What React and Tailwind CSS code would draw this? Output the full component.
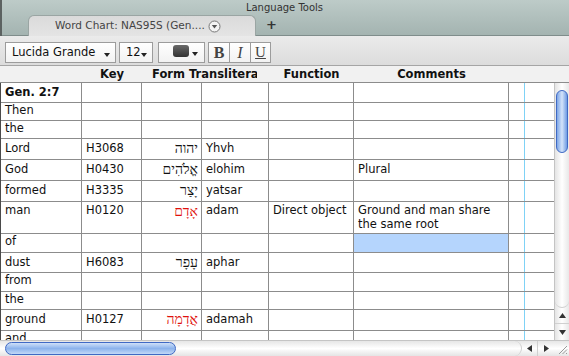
import React from "react";

const rows = [
  { w: "Gen. 2:7", bold: true, h: "h-[20px]", pt: "pt-[2px]" },
  { w: "Then", h: "h-[18px]", pt: "pt-0" },
  { w: "the", h: "h-[18px]", pt: "pt-0" },
  { w: "Lord", key: "H3068", heb: "יהוה", tr: "Yhvh", h: "h-[21px]", pt: "pt-[2px]" },
  { w: "God", key: "H0430", heb: "אֱלֹהִים", tr: "elohim", cm: "Plural", h: "h-[21px]", pt: "pt-[2px]" },
  { w: "formed", key: "H3335", heb: "יָצַר", tr: "yatsar", h: "h-[21px]", pt: "pt-[2px]" },
  {
    w: "man",
    key: "H0120",
    heb: "אָדָם",
    red: true,
    tr: "adam",
    fn: "Direct object",
    cm: "Ground and man share the same root",
    h: "h-[32px]",
    pt: "pt-[1px]",
  },
  { w: "of", h: "h-[19px]", pt: "pt-0", sel: true },
  { w: "dust", key: "H6083", heb: "עָפָר", tr: "aphar", h: "h-[20px]", pt: "pt-[2px]" },
  { w: "from", h: "h-[19px]", pt: "pt-0" },
  { w: "the", h: "h-[18px]", pt: "pt-0" },
  { w: "ground", key: "H0127", heb: "אֲדָמָה", red: true, tr: "adamah", h: "h-[21px]", pt: "pt-[2px]" },
  { w: "and", h: "h-[21px]", pt: "pt-0" },
];

const Arrow = () => (
  <svg width="6" height="4" viewBox="0 0 6 4" className="absolute right-[5px] bottom-[5px]">
    <path d="M0 0 L6 0 L3 4 Z" fill="#222" />
  </svg>
);

const App = () => {
  return (
    <div className="w-[569px] h-[356px] overflow-hidden bg-white flex flex-col font-['DejaVu_Sans',sans-serif] text-[#111]">
      {/* title bar with tab */}
      <div className="h-[36px] flex flex-col bg-gradient-to-b from-[#bdcbc8] to-[#a3b3b0] border-l-2 border-l-[#5c6261]">
        <div className="h-[14px] text-center text-[10px] leading-[15px] text-[#333] pr-[2px]">Language Tools</div>
        <div className="flex-1 flex items-end">
          <div className="w-[26px] h-full border-b border-[#7f8d8b]" />
          <div className="w-[228px] h-[21px] rounded-t-[6px] bg-gradient-to-b from-[#dadada] to-[#e4e4e4] border-t border-l border-r border-[#9aa5a3] flex items-center pl-[26px] gap-[3px]">
            <span className="text-[10.5px] text-[#444] whitespace-nowrap">Word Chart: NAS95S (Gen....</span>
            <svg width="13" height="13" viewBox="0 0 13 13">
              <circle cx="6.5" cy="6.5" r="5.5" fill="#f4f4f4" stroke="#777" strokeWidth="1" />
              <path d="M3.8 5 L9.2 5 L6.5 8.5 Z" fill="#555" />
            </svg>
          </div>
          <div className="flex-1 h-full border-b border-[#7f8d8b] flex items-center pl-[10px] pb-[1px]">
            <span className="text-[13px] font-bold text-[#333] leading-none">+</span>
          </div>
        </div>
      </div>

      {/* toolbar */}
      <div className="h-[30px] bg-gradient-to-b from-[#ebebeb] to-[#dcdcdc] border-b border-[#a5a5a5] flex items-start pt-[6px] pl-[5px]">
        <div className="relative w-[111px] h-[21px] bg-gradient-to-b from-white to-[#f2f2f2] border border-[#9c9c9c] text-[11.5px] leading-[19px] pl-[6px]">
          Lucida Grande
          <Arrow />
        </div>
        <div className="relative ml-[3px] w-[34px] h-[21px] bg-gradient-to-b from-white to-[#f2f2f2] border border-[#9c9c9c] text-[11.5px] leading-[19px] pl-[6px]">
          12
          <Arrow />
        </div>
        <div className="relative ml-[5px] w-[47px] h-[21px] bg-gradient-to-b from-white to-[#f2f2f2] border border-[#9c9c9c]">
          <div className="absolute left-[14px] top-[2px] w-[16px] h-[12px] rounded-[3px] bg-gradient-to-b from-[#6a6a6a] to-[#333]" />
          <svg width="6" height="4" viewBox="0 0 6 4" className="absolute right-[6px] bottom-[6px]">
            <path d="M0 0 L6 0 L3 4 Z" fill="#222" />
          </svg>
        </div>
        <div className="ml-[3px] h-[21px] flex border border-[#9c9c9c] bg-gradient-to-b from-white to-[#f2f2f2] font-['Liberation_Serif',serif] text-[#444]">
          <div className="w-[21px] border-r border-[#9c9c9c] text-center font-bold text-[16px] leading-[19px]">B</div>
          <div className="w-[21px] border-r border-[#9c9c9c] text-center italic text-[16px] leading-[19px]">I</div>
          <div className="w-[19px] text-center underline text-[15px] leading-[19px]">U</div>
        </div>
      </div>

      {/* column header */}
      <div className="h-[17px] bg-[#f1f1f1] border-b border-[#8c8c8c] flex text-[11.5px] leading-[16px] font-bold whitespace-nowrap">
        <div className="w-[82px]" />
        <div className="w-[60px] text-center">Key</div>
        <div className="w-[127px] pl-[10px] pr-[12px]">
          <div className="overflow-hidden">Form Transliteration</div>
        </div>
        <div className="w-[85px] text-center">Function</div>
        <div className="w-[155px] text-center">Comments</div>
      </div>

      {/* body */}
      <div className="h-[257px] flex">
        <div className="w-[554px] border-l border-[#4a4a4a] flex flex-col overflow-hidden text-[11.5px] leading-[14px]">
          {rows.map((r, i) => (
            <div key={i} className={`${r.h} shrink-0 flex border-b border-[#8c8c8c]`}>
              <div className={`w-[81px] border-r border-[#8c8c8c] pl-[4px] ${r.pt} ${r.bold ? "font-bold" : ""}`}>{r.w}</div>
              <div className={`w-[60px] border-r border-[#8c8c8c] pl-[4px] ${r.pt}`}>{r.key}</div>
              <div
                dir="rtl"
                className={`w-[60px] border-r border-[#8c8c8c] pr-[3px] pt-[1px] font-['Liberation_Serif',serif] text-[14px] leading-[17px] ${
                  r.red ? "text-[#e0100c]" : "text-[#111]"
                }`}
              >
                {r.heb}
              </div>
              <div className={`w-[67px] border-r border-[#8c8c8c] pl-[4px] ${r.pt}`}>{r.tr}</div>
              <div className={`w-[85px] border-r border-[#8c8c8c] pl-[4px] ${r.pt} whitespace-nowrap`}>{r.fn}</div>
              <div className={`w-[155px] border-r border-[#8c8c8c] pl-[4px] ${r.pt} ${r.sel ? "bg-[#b5d5fd]" : ""}`}>{r.cm}</div>
              <div className="w-[16px] border-r border-[#7fd2f6]" />
              <div className="flex-1" />
            </div>
          ))}
        </div>

        {/* vertical scrollbar */}
        <div className="w-[15px] flex flex-col border-l border-[#c4c4c4] bg-gradient-to-r from-[#e4e4e4] via-white to-[#e8e8e8]">
          <div className="h-[7px]" />
          <div className="mx-[1px] h-[63px] rounded-full border border-[#3f69c4] bg-gradient-to-r from-[#7ea6e6] via-[#d4e4fa] to-[#6f9be2]" />
          <div className="flex-1 rounded-b-full border-b border-[#cfcfcf]" />
          <div className="h-[16px] flex items-center justify-center border-b border-[#d0d0d0]">
            <svg width="7" height="5" viewBox="0 0 7 5">
              <path d="M3.5 0 L7 5 L0 5 Z" fill="#333" />
            </svg>
          </div>
          <div className="h-[16px] flex items-center justify-center">
            <svg width="7" height="5" viewBox="0 0 7 5">
              <path d="M0 0 L7 0 L3.5 5 Z" fill="#333" />
            </svg>
          </div>
        </div>
      </div>

      {/* horizontal scrollbar */}
      <div className="h-[16px] flex border-t border-[#c4c4c4] bg-gradient-to-b from-[#e6e6e6] via-white to-[#e4e4e4]">
        <div className="w-[522px] flex items-center pl-[5px] rounded-r-full border-r border-[#cfcfcf]">
          <div className="w-[171px] h-[13px] rounded-full border border-[#3f69c4] bg-gradient-to-b from-[#cfe0f8] via-[#8cb3ec] to-[#c2d8f6]" />
        </div>
        <div className="w-[16px] flex items-center justify-center border-r border-[#d0d0d0]">
          <svg width="5" height="7" viewBox="0 0 5 7">
            <path d="M0 3.5 L5 0 L5 7 Z" fill="#333" />
          </svg>
        </div>
        <div className="w-[16px] flex items-center justify-center">
          <svg width="5" height="7" viewBox="0 0 5 7">
            <path d="M5 3.5 L0 0 L0 7 Z" fill="#333" />
          </svg>
        </div>
        <div className="flex-1 flex items-end justify-end pr-[1px] pb-[1px]">
          <svg width="12" height="12" viewBox="0 0 12 12">
            <path d="M11 3 L3 11 M11 6.5 L6.5 11 M11 10 L10 11" stroke="#999" strokeWidth="1" />
          </svg>
        </div>
      </div>
    </div>
  );
};

export default App;
